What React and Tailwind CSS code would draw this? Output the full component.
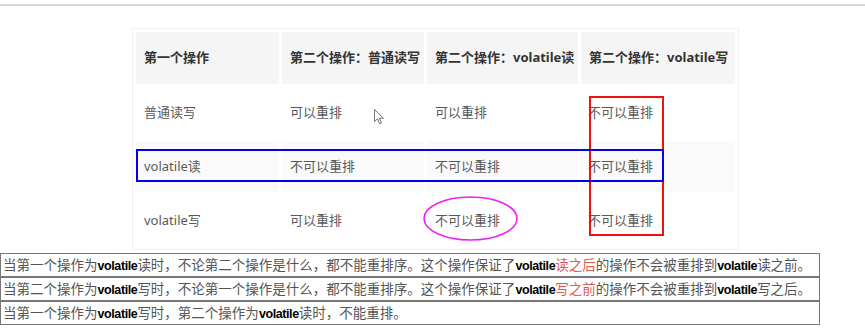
import React from 'react';

const cjk = { fontFamily: '"Noto Sans", "Noto Sans CJK SC", sans-serif' };

const header = ['第一个操作', '第二个操作：普通读写', '第二个操作：volatile读', '第二个操作：volatile写'];
const rows = [
  { bg: 'bg-white', cells: ['普通读写', '可以重排', '可以重排', '不可以重排'] },
  { bg: 'bg-[#fafafa]', cells: ['volatile读', '不可以重排', '不可以重排', '不可以重排'] },
  { bg: 'bg-white', cells: ['volatile写', '可以重排', '不可以重排', '不可以重排'] },
];
const widths = ['w-[143px]', 'w-[142px]', 'w-[151px]', 'w-[154px]'];

const V = () => (
  <span className="font-bold text-[12.5px] tracking-[-0.4px] text-black" style={{ fontFamily: '"Liberation Sans", Arial, sans-serif' }}>
    volatile
  </span>
);

const Red = ({ children }) => <span className="text-[#e05a4f]">{children}</span>;

export default function App() {
  return (
    <div className="relative w-[865px] h-[335px] bg-white overflow-hidden" style={cjk}>
      {/* top window edge */}
      <div className="h-[4px]" />
      <div className="h-[2px] bg-[#d8d8d8]" />

      {/* comparison table */}
      <div className="ml-[132px] mt-[22px]">
        <table className="border-separate border-spacing-[3px] border border-[#f0f0f0] text-[13px]">
          <thead>
            <tr>
              {header.map((h, i) => (
                <th key={h} className={`${widths[i]} h-[52px] bg-[#f5f5f5] text-left font-bold text-[#333] pl-[8px] pr-0 whitespace-nowrap`}>
                  {h}
                </th>
              ))}
            </tr>
          </thead>
          <tbody>
            {rows.map((r, ri) => (
              <tr key={ri}>
                {r.cells.map((c, ci) => (
                  <td key={ci} className={`${r.bg} h-[51px] text-[#595959] ${ci === 3 ? 'pl-[7px]' : 'pl-[8px]'} whitespace-nowrap`}>
                    {c}
                  </td>
                ))}
              </tr>
            ))}
          </tbody>
        </table>
      </div>

      {/* notes */}
      <div className="mt-[3px] w-[820px] flex flex-col text-[13.5px] text-[#555]">
        <div className="h-[24px] border border-[#777] pl-[2px] leading-[22px] whitespace-nowrap">
          当第一个操作为<V />读时，不论第二个操作是什么，都不能重排序。这个操作保证了<V /><Red>读之后</Red>的操作不会被重排到<V />读之前。
        </div>
        <div className="h-[24px] border border-[#777] pl-[2px] leading-[22px] whitespace-nowrap">
          当第二个操作为<V />写时，不论第一个操作是什么，都不能重排序。这个操作保证了<V /><Red>写之前</Red>的操作不会被重排到<V />写之后。
        </div>
        <div className="h-[24px] border border-[#777] pl-[2px] leading-[22px] whitespace-nowrap">
          当第一个操作为<V />写时，第二个操作为<V />读时，不能重排。
        </div>
      </div>

      {/* annotations drawn over the table */}
      <div className="absolute left-[589px] top-[96px] w-[75px] h-[140px] border-2 border-[#f01010]" />
      <div className="absolute left-[136px] top-[149px] w-[528px] h-[33px] border-2 border-[#0000e6]" />
      <svg className="absolute left-[422px] top-[195px]" width="97" height="47" viewBox="0 0 97 47">
        <ellipse cx="48.5" cy="23.5" rx="46.5" ry="21.5" fill="none" stroke="#ee22ee" strokeWidth="1.6" />
      </svg>
      <svg className="absolute left-[374px] top-[109px]" width="11" height="17" viewBox="0 0 11 17">
        <path d="M0.5 0.5 L0.5 12.5 L3.5 9.8 L5.6 14.8 L7.4 14 L5.4 9.2 L9.5 9.2 Z" fill="#fff" stroke="#666" strokeWidth="0.9" strokeLinejoin="round" />
      </svg>
    </div>
  );
}
